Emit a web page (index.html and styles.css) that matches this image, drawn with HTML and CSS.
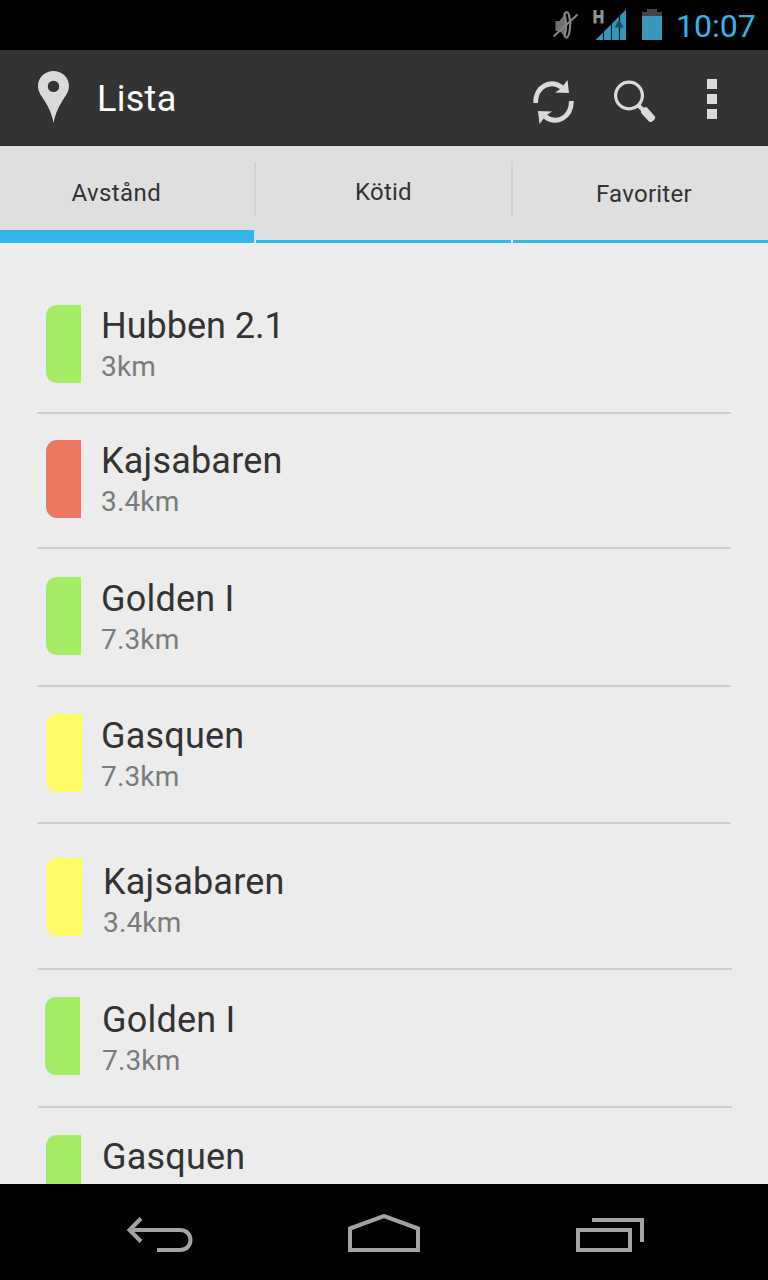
FILE: index.html
```html
<!DOCTYPE html>
<html lang="sv">
<head>
<meta charset="utf-8">
<title>Lista</title>
<link rel="stylesheet" href="styles.css">
</head>
<body>
<div class="screen">
  <div class="status-bar">
    <svg class="status-icons" width="124" height="50" viewBox="0 0 124 50">
      <g fill="none" stroke="#858585">
        <path d="M15.500 21h4l6-8v24l-6-6h-4z" fill="#707070" stroke="none"/>
        <path d="M24.500 14q3-4 4.500 1 2.500 9 0 19-2 6-4.500 2 3-9 0-22z" stroke-width="2.200"/>
        <path d="M13.500 36.500 37.500 14.500" stroke-width="2"/>
      </g>
      <path d="M55 10v13.500M62 10v13.500M55 16.500h7" stroke="#929292" stroke-width="3" fill="none"/>
      <path d="M55.500 40 86 9.500V40z" fill="#3396bd"/>
      <path d="M63.500 30v10M71.500 22v18M79.500 15v25" stroke="#061a22" stroke-width="1.200"/>
      <path d="M79 19.500l4.500 8h-9z" fill="#204858"/>
      <path d="M107 9h10v3h5v4h-20v-4h5z" fill="#444"/>
      <path d="M102 16h20v24h-20z" fill="#3a96ba"/>
    </svg>
    <span class="clock">10:07</span>
  </div>

  <header class="action-bar">
    <svg class="pin" width="31" height="52" viewBox="0 0 31 52">
      <path fill="#dadada" fill-rule="evenodd" d="M15.500 0C24 0 31 6.500 31 15c0 6-3.500 10-7 15.500C19.500 37.500 17 44 15.500 52 14 44 11.500 37.500 7 30.500 3.500 25 0 21 0 15 0 6.500 7 0 15.500 0zm0 9.700a5.700 5.700 0 1 0 0 11.400 5.700 5.700 0 0 0 0-11.400z"/>
    </svg>
    <h1 class="title">Lista</h1>
    <svg class="refresh" width="42" height="46" viewBox="0 0 42 46">
      <g fill="none" stroke="#dadada" stroke-width="4.800">
        <path d="M2.600 24C2.600 7 18 0 29 8.500"/>
        <path d="M38.400 22C38.400 39 23 46 12 37.500"/>
      </g>
      <path fill="#dadada" d="M34.500 1 36 14 22 13.500l6-4zM6.500 45 5 32l14 .5-6 4z"/>
    </svg>
    <svg class="search" width="42" height="43" viewBox="0 0 42 43">
      <circle cx="15" cy="15.500" r="13.400" fill="none" stroke="#dadada" stroke-width="3.200"/>
      <path d="M24 25l6 6" stroke="#dadada" stroke-width="4"/>
      <path d="M27.500 28.500l4-1.500q1 0 2 1l7 8q2 2-1 4.500t-4.500 1l-7-7.500q-2-2-.5-5.500z" fill="#dadada"/>
    </svg>
    <svg class="overflow" width="10" height="40" viewBox="0 0 10 40">
      <path fill="#dadada" d="M0 0h10v10H0zM0 15h10v10H0zM0 30h10v10H0z"/>
    </svg>
  </header>

  <nav class="tabs">
    <a class="tab tab-active"><span>Avstånd</span></a>
    <i class="separator"></i>
    <a class="tab tab-queue"><span>Kötid</span></a>
    <i class="separator"></i>
    <a class="tab tab-favorites"><span>Favoriter</span></a>
  </nav>

  <main class="list">
    <section class="row row-1"><i class="marker green"></i><div class="info"><h2 class="name">Hubben 2.1</h2><p class="distance">3km</p></div></section>
    <section class="row row-2"><i class="marker red"></i><div class="info"><h2 class="name">Kajsabaren</h2><p class="distance">3.4km</p></div></section>
    <section class="row row-3"><i class="marker green"></i><div class="info"><h2 class="name">Golden I</h2><p class="distance">7.3km</p></div></section>
    <section class="row row-4"><i class="marker yellow"></i><div class="info"><h2 class="name">Gasquen</h2><p class="distance">7.3km</p></div></section>
    <section class="row row-5"><i class="marker yellow"></i><div class="info"><h2 class="name">Kajsabaren</h2><p class="distance">3.4km</p></div></section>
    <section class="row row-6"><i class="marker green"></i><div class="info"><h2 class="name">Golden I</h2><p class="distance">7.3km</p></div></section>
    <section class="row row-7"><i class="marker green"></i><div class="info"><h2 class="name">Gasquen</h2></div></section>
  </main>

  <footer class="nav-bar">
    <svg class="back" width="68" height="36" viewBox="0 0 68 36" fill="none" stroke="#a3a3a3" stroke-width="4">
      <path d="M4 14h50c7 0 10.500 5 10.500 10S61 34 54 34H31"/>
      <path d="M15 2.500 3.500 14 15 25.500"/>
    </svg>
    <svg class="home" width="72" height="38" viewBox="0 0 72 38" fill="none" stroke="#a3a3a3" stroke-width="4">
      <path d="M2 36V14.500L36 2l34 12.500V36z"/>
    </svg>
    <svg class="recents" width="68" height="34" viewBox="0 0 68 34" fill="none" stroke="#a3a3a3" stroke-width="4">
      <path d="M2 12h52v20H2zM16 2h50v22"/>
    </svg>
  </footer>
</div>
</body>
</html>
```

FILE: styles.css
```css
* { box-sizing: border-box; }

body {
  margin: 0;
  font-family: Roboto, "Liberation Sans", sans-serif;
  background: #000;
}

h1, h2, p { margin: 0; font-weight: 400; }

svg { display: block; flex: none; }

.screen {
  display: flex;
  flex-direction: column;
  width: 768px;
  height: 1280px;
  overflow: hidden;
}

.status-bar {
  display: flex;
  flex: none;
  height: 50px;
  padding-left: 540px;
  background: #000;
}

.clock {
  padding: 7px 0 0 12px;
  font-size: 32px;
  line-height: 38px;
  color: #33b5e5;
  white-space: nowrap;
}

.action-bar {
  display: flex;
  flex: none;
  align-items: flex-start;
  height: 96px;
  padding-left: 38px;
  background: #333;
  border-bottom: 1px solid #252525;
}

.pin { margin-top: 21px; }

.title {
  width: 435px;
  padding: 28px 0 0 28px;
  font-size: 36px;
  line-height: 42px;
  letter-spacing: .3px;
  color: #fff;
}

.refresh { margin: 29px 0 0 29px; }
.search { margin: 30px 0 0 39px; }
.overflow { margin: 29px 0 0 51px; }

.tabs {
  display: flex;
  flex: none;
  height: 97px;
  background: #dfdfdf;
}

.tab {
  flex: none;
  width: 255px;
  padding-top: 33px;
  border-bottom: 3px solid #33b5e5;
  font-size: 24px;
  line-height: 28px;
  letter-spacing: .25px;
  color: #333;
}

.tab-active {
  width: 254px;
  padding-left: 71.5px;
  border-bottom-width: 13px;
  letter-spacing: .4px;
}

.tab-queue { padding: 32px 0 0 99px; }
.tab-favorites { padding: 34px 0 0 83px; }

.separator {
  flex: none;
  width: 2px;
  height: 97px;
  background: linear-gradient(#dfdfdf 16px, #d2d2d2 16px 70px, #dfdfdf 70px 94px, #ececec 94px);
}

.list {
  flex: 1;
  min-height: 0;
  padding: 0 37px;
  background: #ececec;
  overflow: hidden;
}

.row {
  display: flex;
  align-items: flex-start;
  height: 138px;
  padding: 27px 0 0 9px;
  border-bottom: 2px solid #cecece;
}

.marker {
  flex: none;
  width: 35px;
  height: 78px;
  border-radius: 11px 0 0 11px;
}

.green { background: #a4ec64; }
.red { background: #ed7862; }
.yellow { background: #fffa66; }

.info { padding-left: 20px; }

.name {
  font-size: 36px;
  line-height: 42px;
  letter-spacing: .2px;
  color: #333;
}

.distance {
  margin-top: 3px;
  font-size: 28px;
  line-height: 33px;
  letter-spacing: .15px;
  color: #7b7b7b;
}

.row-1 { height: 171px; padding-top: 62px; }
.row-1 .name { letter-spacing: 0; }
.row-2 { height: 135px; padding-top: 26px; }
.row-3 { padding-top: 28px; }
.row-4 { height: 137px; }
.row-5 { height: 146px; margin: 0 -1px 0 1px; padding: 34px 0 0 8px; }
.row-6 { margin: 0 -1px 0 1px; padding-left: 7px; }
.row-7 { margin: 0 -1px 0 1px; padding-left: 8px; }

.row-3 .info, .row-4 .info, .row-7 .info { padding-top: 1px; }
.row-4 .marker, .row-5 .marker { width: 36px; }
.row-4 .info { padding-left: 19px; }
.row-5 .info { padding: 3px 0 0 21px; }
.row-6 .info { padding: 2px 0 0 22px; }
.row-7 .info { padding-left: 21px; }

.nav-bar {
  display: flex;
  flex: none;
  align-items: flex-end;
  height: 96px;
  padding: 0 0 28px 126px;
  background: #000;
}

.home { margin-left: 154px; }
.recents { margin-left: 156px; }
```
